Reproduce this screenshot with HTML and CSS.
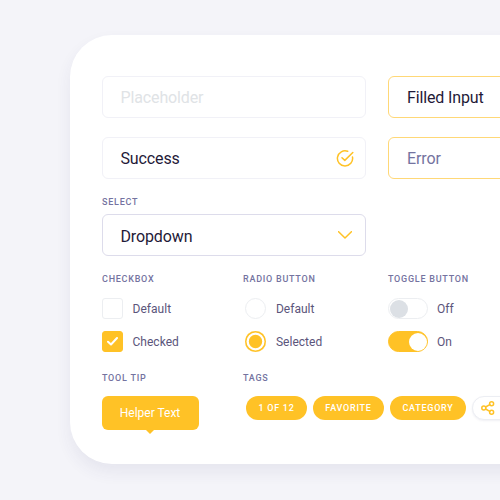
FILE: index.html
```html
<!DOCTYPE html>
<html lang="en">
<head>
<meta charset="utf-8">
<title>Form elements</title>
<link rel="stylesheet" href="styles.css">
</head>
<body>
<main class="card">
  <section class="inputs">
    <div class="field placeholder"><span>Placeholder</span></div>
    <div class="field filled"><span>Filled Input</span></div>
    <div class="field"><span>Success</span>
      <svg class="success-icon" width="18" height="18" viewBox="0 0 18 18"><path d="M11.7 1.3A7.6 7.6 0 1 0 16.5 7.1M6 7.7l2.8 2.7L16.8 2.5"/></svg>
    </div>
    <div class="field error"><span>Error</span></div>
  </section>
  <section class="select">
    <h2>SELECT</h2>
    <div class="field dropdown"><span>Dropdown</span>
      <svg class="chevron" width="14" height="8" viewBox="0 0 14 8"><path d="M.6.7 7 7l6.4-6.3"/></svg>
    </div>
  </section>
  <section class="controls">
    <div class="group">
      <h2>CHECKBOX</h2>
      <div class="option"><i class="box"></i>Default</div>
      <div class="option"><i class="box checked"><svg width="11" height="9" viewBox="0 0 11 9"><path d="M1 4.7 4 7.5 10 1"/></svg></i>Checked</div>
    </div>
    <div class="group radios">
      <h2>RADIO BUTTON</h2>
      <div class="option"><i class="radio"></i>Default</div>
      <div class="option"><i class="radio selected"></i>Selected</div>
    </div>
    <div class="group toggles">
      <h2>TOGGLE BUTTON</h2>
      <div class="option"><i class="toggle"></i>Off</div>
      <div class="option"><i class="toggle on"></i>On</div>
    </div>
  </section>
  <section class="extras">
    <div class="group">
      <h2>TOOL TIP</h2>
      <div class="tooltip">Helper Text</div>
    </div>
    <div class="group">
      <h2>TAGS</h2>
      <div class="tags">
        <span class="tag count">1 OF 12</span>
        <span class="tag favorite">FAVORITE</span>
        <span class="tag category">CATEGORY</span>
        <span class="tag share"><svg width="14" height="14" viewBox="0 0 14 14"><path d="m4.6 6 4.2-2.4M4.6 8l4.2 2.4"/><circle cx="2.8" cy="7" r="2"/><circle cx="10.6" cy="2.8" r="2"/><circle cx="10.6" cy="11.2" r="2"/></svg></span>
      </div>
    </div>
  </section>
</main>
</body>
</html>
```
FILE: styles.css
```css
* { box-sizing: border-box; }
body {
  display: flow-root;
  margin: 0;
  height: 500px;
  overflow: hidden;
  background: #f4f4f9;
  font-family: Roboto, "Liberation Sans", sans-serif;
  color: #1f1a38;
}
.card {
  width: 620px;
  height: 429px;
  margin: 34.5px 0 0 70px;
  padding: 41.5px 32px 0;
  border-radius: 42px;
  background: #fff;
  box-shadow: 0 8px 16px rgba(60, 60, 110, .075);
}
.inputs {
  display: grid;
  grid-template-columns: 264px 264px;
  gap: 19px 22px;
}
.field {
  display: flex;
  align-items: center;
  justify-content: space-between;
  width: 264px;
  height: 42px;
  padding: 1px 11px 0 17.5px;
  border: 1px solid #f1f1f7;
  border-radius: 6px;
  font-size: 16px;
  letter-spacing: -.13px;
}
.placeholder { color: #e0e3e6; }
.filled, .error { padding-left: 18px; border-color: #ffd877; }
.error { color: #7473a0; }
svg { display: block; fill: none; stroke: #ffc226; stroke-width: 1.5; stroke-linecap: round; stroke-linejoin: round; }
h2 {
  margin: 0;
  height: 12px;
  font-size: 9px;
  line-height: 12px;
  font-weight: 500;
  letter-spacing: .75px;
  color: #7473a0;
  white-space: nowrap;
}
.select { margin-top: 17px; }
.dropdown { margin-top: 6px; border-color: #dddceb; }
.dropdown span { padding-top: 1px; }
.chevron { margin: 0 2px 1px 0; }
.controls, .extras {
  display: grid;
  grid-template-columns: 141px 145px 1fr;
}
.controls { margin-top: 17px; }
.option {
  display: flex;
  align-items: center;
  gap: 9.5px;
  height: 21px;
  margin-top: 12px;
  font-size: 12px;
  letter-spacing: .03px;
  color: #5b557b;
}
h2 + .option { margin-top: 13px; }
.box, .radio, .toggle { display: flex; flex: none; width: 21px; height: 21px; border: 1px solid #eceef1; background: #fff; }
.box { align-items: center; justify-content: center; border-radius: 3px; }
.box.checked { border-color: #ffc226; background: #ffc226; }
.box svg { stroke: #fff; stroke-width: 2; }
.radio { margin-left: 2.4px; border-radius: 50%; }
.radio.selected { border: 0; background: #ffc226; box-shadow: inset 0 0 0 1.5px #ffc226, inset 0 0 0 3.8px #fff; }
.toggle { width: 40px; border-radius: 11px; align-items: center; padding: 0 1px; }
.toggles .option { gap: 9px; }
.toggle::before { content: ""; width: 18px; height: 18px; border-radius: 50%; background: #dce0e5; }
.toggle.on { justify-content: flex-end; padding: 0; border-color: #ffc226; background: #ffc226; }
.toggle.on::before { background: #fff; }
.extras { margin-top: 20px; grid-template-columns: 141px 1fr; }
.tooltip {
  position: relative;
  width: 97px;
  height: 34px;
  margin: 12px 0 0 -.5px;
  border-radius: 6px;
  background: #ffc226;
  color: #fff;
  font-size: 12px;
  line-height: 34px;
  text-align: center;
}
.tooltip::after {
  content: "";
  position: absolute;
  top: 33px;
  left: 43px;
  border: 5.5px solid transparent;
  border-top: 5px solid #ffc226;
  border-bottom: 0;
}
.tags { display: flex; gap: 6px; margin: 12px 0 0 3px; }
.tag {
  display: flex;
  flex: none;
  align-items: center;
  justify-content: center;
  height: 24px;
  border-radius: 12px;
  background: #ffc226;
  color: #fff;
  font-size: 9px;
  font-weight: 500;
  letter-spacing: .75px;
}
.count { width: 61px; }
.favorite { width: 71px; }
.category { width: 76px; }
.share {
  width: 61px;
  padding-left: 8px;
  justify-content: flex-start;
  border: 1px solid #eceef3;
  background: #fff;
  box-shadow: 0 1px 2px rgba(60, 60, 110, .08);
}
```
